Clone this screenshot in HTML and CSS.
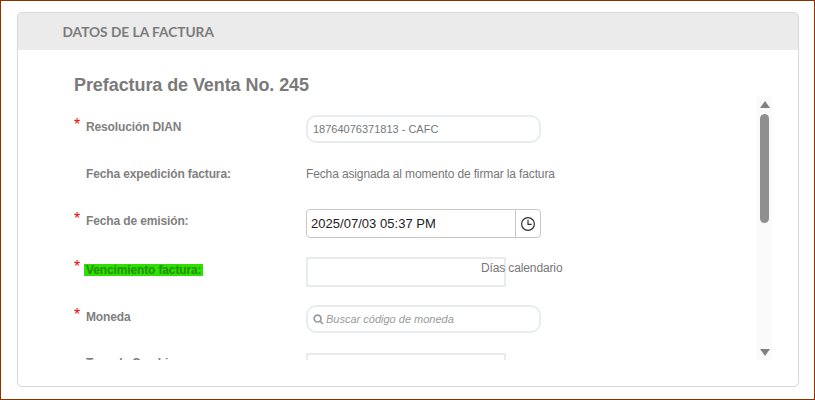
FILE: index.html
```html
<!DOCTYPE html>
<html lang="es">
<head>
<meta charset="utf-8">
<title>Datos de la factura</title>
<link rel="stylesheet" href="styles.css">
</head>
<body>
<div class="frame">
  <section class="card">
    <header class="card-head">DATOS DE LA FACTURA</header>
    <div class="card-body">
      <div class="form">
        <h2 class="title">Prefactura de Venta No. 245</h2>
        <div class="row tight">
          <div class="label"><span class="star">*</span><span>Resolución DIAN</span></div>
          <div class="pill"><span class="pill-text">18764076371813 - CAFC</span></div>
        </div>
        <div class="row tight">
          <div class="label"><span class="star"></span><span>Fecha expedición factura:</span></div>
          <div class="plain">Fecha asignada al momento de firmar la factura</div>
        </div>
        <div class="row">
          <div class="label"><span class="star">*</span><span>Fecha de emisión:</span></div>
          <div class="date">
            <span class="date-text">2025/07/03 05:37 PM</span>
            <span class="date-btn">
              <svg width="16" height="16" viewBox="0 0 16 16" fill="none" stroke="#2b2f36" stroke-width="1.2"><circle cx="8" cy="8" r="6.4"/><path d="M8 3.8V8.4H11.6"/></svg>
            </span>
          </div>
        </div>
        <div class="row">
          <div class="label"><span class="star">*</span><span class="mark">Vencimiento factura:</span></div>
          <div class="box"></div>
          <span class="unit">Días calendario</span>
        </div>
        <div class="row">
          <div class="label"><span class="star">*</span><span>Moneda</span></div>
          <div class="pill search">
            <svg width="11" height="11" viewBox="0 0 11 11" fill="none" stroke="#9a9a9a" stroke-width="1.7"><circle cx="4.6" cy="4.6" r="3.4"/><path d="M7.1 7.1L10 10"/></svg>
            <span class="placeholder">Buscar código de moneda</span>
          </div>
        </div>
        <div class="row last">
          <div class="label"><span class="star"></span><span>Tasa de Cambio</span></div>
          <div class="box"></div>
        </div>
      </div>
      <div class="scrollbar">
        <span class="arrow up"></span>
        <span class="thumb"></span>
        <span class="arrow down"></span>
      </div>
    </div>
  </section>
</div>
</body>
</html>
```

FILE: styles.css
```css
* { box-sizing: border-box; }
html, body { margin: 0; padding: 0; background: #fff; }
body { font-family: "Liberation Sans", Arial, sans-serif; color: #7d7d7d; }
.frame {
  width: 815px; height: 400px;
  border: 1px solid #8a3200;
  padding: 11px 15px 12px 16px;
  background: #fff;
}
.card {
  height: 100%;
  border: 1px solid #d9d9d9;
  border-radius: 5px;
  overflow: hidden;
  box-shadow: 0 0 1px #ddd;
}
.card-head {
  height: 37px;
  background: #ebebeb;
  padding-left: 44.5px;
  display: flex; align-items: center;
  font-family: Lato, sans-serif;
  font-size: 13.7px; font-weight: 700;
  color: #7b7b7b;
}
.card-body {
  display: flex;
  height: 310px;
  padding-left: 56px;
}
.form { width: 683px; height: 310px; overflow: hidden; padding-top: 25px; }
.title {
  margin: 0 0 19px;
  font-size: 18px; line-height: 21px; font-weight: 700;
  letter-spacing: -0.08px;
  color: #7a7a7a;
}
.row { display: flex; height: 48px; align-items: flex-start; }
.tight { height: 47px; }
.label {
  width: 232px; display: flex; align-items: flex-start;
  font-size: 12px; font-weight: 700; line-height: 14px; color: #7f7f80;
  letter-spacing: -0.13px;
  padding-top: 5px;
}
.last .label { padding-top: 3px; }
.star {
  width: 12px; flex: none;
  color: #f00; font-size: 16px; line-height: 10px;
  font-weight: 400;
}
.mark {
  background: #2de000; color: #258f00;
  margin: 2px 0 0 -2px; padding: 0 2px 0 2px;
  line-height: 12px;
}
.pill {
  width: 235px; height: 28px;
  border: 2px solid #e9ecef; border-radius: 10px;
  display: flex; align-items: center;
  padding-left: 5px;
}
.pill-text { font-size: 11px; color: #777; }
.search { gap: 2px; padding-left: 5px; }
.placeholder { font-size: 11px; font-style: italic; color: #9a9a9a; }
.plain { font-size: 12px; line-height: 14px; padding-top: 5px; color: #777; letter-spacing: -0.13px; }
.date {
  width: 235px; height: 29px;
  border: 1px solid #c8c8c8; border-radius: 4px;
  display: flex; align-items: center;
}
.date-text { flex: 1; padding-left: 4px; font-size: 13px; letter-spacing: 0.03px; color: #222; }
.date-btn {
  width: 25px; height: 100%;
  border-left: 1px solid #c8c8c8;
  display: flex; align-items: center; justify-content: center;
}
.box { width: 200px; height: 30px; border: 2px solid #e9ecef; flex: none; }
.unit { margin-left: -25px; font-size: 12px; line-height: 14px; padding-top: 4px; color: #777; letter-spacing: -0.13px; }
.scrollbar {
  width: 15px; height: 264px; margin-top: 46px;
  background: #fafafa;
  display: flex; flex-direction: column; align-items: center;
  padding-top: 5px;
}
.arrow { width: 0; height: 0; border-left: 5px solid transparent; border-right: 5px solid transparent; flex: none; }
.up { border-bottom: 7px solid #808080; }
.down { border-top: 7px solid #808080; margin-top: 126px; }
.thumb { width: 9px; height: 109px; margin-top: 6px; background: #8f8f8f; border-radius: 4.5px; flex: none; }
```
